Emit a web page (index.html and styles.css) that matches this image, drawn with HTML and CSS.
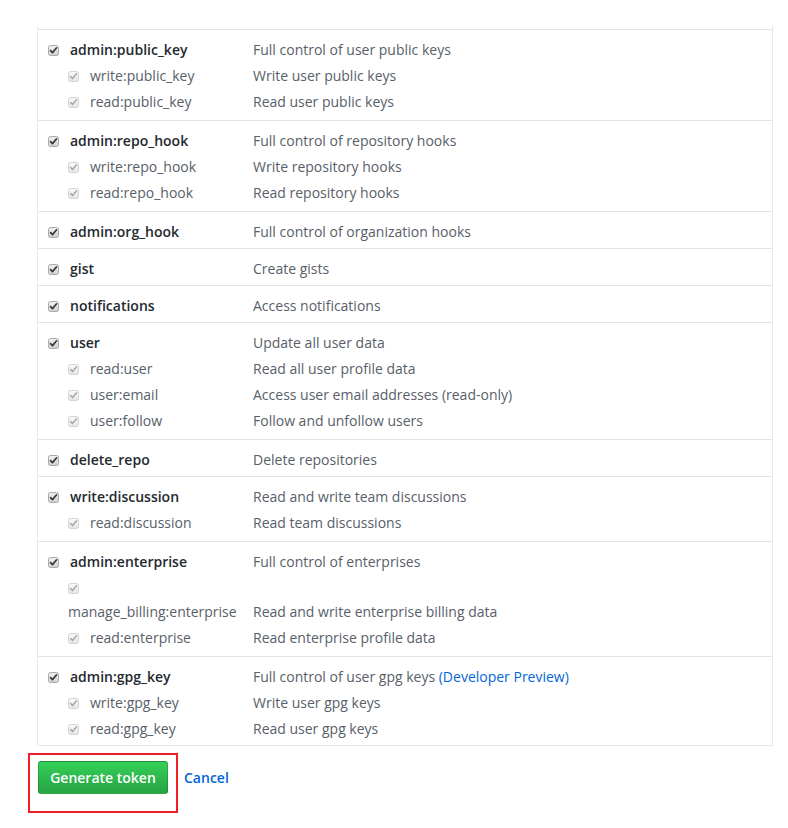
FILE: index.html
```html
<!DOCTYPE html>
<html lang="en">
<head>
<meta charset="utf-8">
<title>Token scopes</title>
<link rel="stylesheet" href="styles.css">
</head>
<body>
<svg width="0" height="0" class="defs" aria-hidden="true">
  <defs>
    <linearGradient id="cbOn" x1="0" y1="0" x2="0" y2="1">
      <stop offset="0" stop-color="#f2f2f2"/>
      <stop offset="1" stop-color="#cfcfcf"/>
    </linearGradient>
    <linearGradient id="cbOff" x1="0" y1="0" x2="0" y2="1">
      <stop offset="0" stop-color="#fafafa"/>
      <stop offset="1" stop-color="#e6e6e6"/>
    </linearGradient>
    <symbol id="cb-on" viewBox="0 0 11 11">
      <rect x="0.5" y="0.5" width="10" height="10" rx="2" fill="url(#cbOn)" stroke="#a9a9a9"/>
      <path d="M2.6 5.6 L4.5 7.6 L8.6 2.8" fill="none" stroke="#3a3a3a" stroke-width="1.7" stroke-linecap="round" stroke-linejoin="round"/>
    </symbol>
    <symbol id="cb-off" viewBox="0 0 11 11">
      <rect x="0.5" y="0.5" width="10" height="10" rx="2" fill="url(#cbOff)" stroke="#d3d3d3"/>
      <path d="M2.6 5.6 L4.5 7.6 L8.6 2.8" fill="none" stroke="#a8a8a8" stroke-width="1.5" stroke-linecap="round" stroke-linejoin="round"/>
    </symbol>
  </defs>
</svg>

<div class="page">
  <div class="scopes">

    <div class="scope">
      <div class="line parent"><label class="name"><svg class="cb"><use href="#cb-on"/></svg>admin:public_key</label><span class="desc">Full control of user public keys</span></div>
      <div class="subs">
        <div class="line sub"><label class="name"><svg class="cb"><use href="#cb-off"/></svg>write:public_key</label><span class="desc">Write user public keys</span></div>
        <div class="line sub"><label class="name"><svg class="cb"><use href="#cb-off"/></svg>read:public_key</label><span class="desc">Read user public keys</span></div>
      </div>
    </div>

    <div class="scope">
      <div class="line parent"><label class="name"><svg class="cb"><use href="#cb-on"/></svg>admin:repo_hook</label><span class="desc">Full control of repository hooks</span></div>
      <div class="subs">
        <div class="line sub"><label class="name"><svg class="cb"><use href="#cb-off"/></svg>write:repo_hook</label><span class="desc">Write repository hooks</span></div>
        <div class="line sub"><label class="name"><svg class="cb"><use href="#cb-off"/></svg>read:repo_hook</label><span class="desc">Read repository hooks</span></div>
      </div>
    </div>

    <div class="scope">
      <div class="line parent"><label class="name"><svg class="cb"><use href="#cb-on"/></svg>admin:org_hook</label><span class="desc">Full control of organization hooks</span></div>
    </div>

    <div class="scope">
      <div class="line parent"><label class="name"><svg class="cb"><use href="#cb-on"/></svg>gist</label><span class="desc">Create gists</span></div>
    </div>

    <div class="scope">
      <div class="line parent"><label class="name"><svg class="cb"><use href="#cb-on"/></svg>notifications</label><span class="desc">Access notifications</span></div>
    </div>

    <div class="scope">
      <div class="line parent"><label class="name"><svg class="cb"><use href="#cb-on"/></svg>user</label><span class="desc">Update all user data</span></div>
      <div class="subs">
        <div class="line sub"><label class="name"><svg class="cb"><use href="#cb-off"/></svg>read:user</label><span class="desc">Read all user profile data</span></div>
        <div class="line sub"><label class="name"><svg class="cb"><use href="#cb-off"/></svg>user:email</label><span class="desc">Access user email addresses (read-only)</span></div>
        <div class="line sub"><label class="name"><svg class="cb"><use href="#cb-off"/></svg>user:follow</label><span class="desc">Follow and unfollow users</span></div>
      </div>
    </div>

    <div class="scope">
      <div class="line parent"><label class="name"><svg class="cb"><use href="#cb-on"/></svg>delete_repo</label><span class="desc">Delete repositories</span></div>
    </div>

    <div class="scope">
      <div class="line parent"><label class="name"><svg class="cb"><use href="#cb-on"/></svg>write:discussion</label><span class="desc">Read and write team discussions</span></div>
      <div class="subs">
        <div class="line sub"><label class="name"><svg class="cb"><use href="#cb-off"/></svg>read:discussion</label><span class="desc">Read team discussions</span></div>
      </div>
    </div>

    <div class="scope">
      <div class="line parent"><label class="name"><svg class="cb"><use href="#cb-on"/></svg>admin:enterprise</label><span class="desc">Full control of enterprises</span></div>
      <div class="subs">
        <div class="line sub"><label class="name"><svg class="cb"><use href="#cb-off"/></svg> manage_billing:enterprise</label><span class="desc">Read and write enterprise billing data</span></div>
        <div class="line sub"><label class="name"><svg class="cb"><use href="#cb-off"/></svg>read:enterprise</label><span class="desc">Read enterprise profile data</span></div>
      </div>
    </div>

    <div class="scope">
      <div class="line parent"><label class="name"><svg class="cb"><use href="#cb-on"/></svg>admin:gpg_key</label><span class="desc">Full control of user gpg keys <a class="link" href="#">(Developer Preview)</a></span></div>
      <div class="subs">
        <div class="line sub"><label class="name"><svg class="cb"><use href="#cb-off"/></svg>write:gpg_key</label><span class="desc">Write user gpg keys</span></div>
        <div class="line sub"><label class="name"><svg class="cb"><use href="#cb-off"/></svg>read:gpg_key</label><span class="desc">Read user gpg keys</span></div>
      </div>
    </div>

  </div>

  <div class="actions">
    <div class="highlight">
      <button class="btn-primary" type="button">Generate token</button>
    </div>
    <a class="cancel" href="#">Cancel</a>
  </div>
</div>
</body>
</html>
```

FILE: styles.css
```css
html, body {
  margin: 0;
  padding: 0;
  background: #ffffff;
}

body {
  font-family: "Open Sans", "Noto Sans", "Liberation Sans", sans-serif;
  font-size: 14px;
  color: #586069;
}

.defs {
  position: absolute;
  width: 0;
  height: 0;
  overflow: hidden;
}

.page {
  padding-top: 26px;
}

.scopes {
  margin-left: 37px;
  width: 734px;
  border-left: 1px solid #e6e8eb;
  border-right: 1px solid #e6e8eb;
  border-bottom: 1px solid #e6e8eb;
  padding-top: 3px;
}

.scope {
  border-top: 1px solid #e1e4e8;
  padding: 10px 10px 6px;
}

.scope:last-child {
  padding-bottom: 4px;
}

.line {
  display: flex;
  align-items: flex-end;
}

.name {
  flex: 0 0 205px;
  box-sizing: border-box;
  padding-right: 10px;
}

.desc {
  flex: 1 1 auto;
  color: #586069;
}

.parent {
  line-height: 20px;
}

.parent .name {
  color: #24292e;
  font-weight: 600;
}

.subs {
  padding-top: 2px;
}

.sub {
  line-height: 24px;
  min-height: 24px;
  padding: 2px 0 0;
}

.sub .name {
  padding-left: 20px;
  color: #586069;
}

.cb {
  display: inline-block;
  width: 11px;
  height: 11px;
  margin-right: 11px;
  vertical-align: -1px;
}

.link {
  color: #0366d6;
  text-decoration: none;
}

.actions {
  display: flex;
  align-items: flex-start;
  margin-left: 28px;
  margin-top: 7px;
}

.highlight {
  border: 2px solid #f01d22;
  padding: 6px 8px 17px 8px;
}

.btn-primary {
  display: block;
  font-family: "Open Sans", "Noto Sans", "Liberation Sans", sans-serif;
  font-size: 14px;
  font-weight: 600;
  line-height: 19px;
  color: #ffffff;
  padding: 6px 0;
  width: 130px;
  border: 1px solid rgba(27, 31, 35, 0.2);
  border-radius: 3px;
  background-image: linear-gradient(-180deg, #34d058 0%, #28a745 90%);
  text-align: center;
}

.cancel {
  margin-left: 6px;
  margin-top: 15px;
  line-height: 20px;
  color: #0366d6;
  font-weight: 600;
  text-decoration: none;
}
```
